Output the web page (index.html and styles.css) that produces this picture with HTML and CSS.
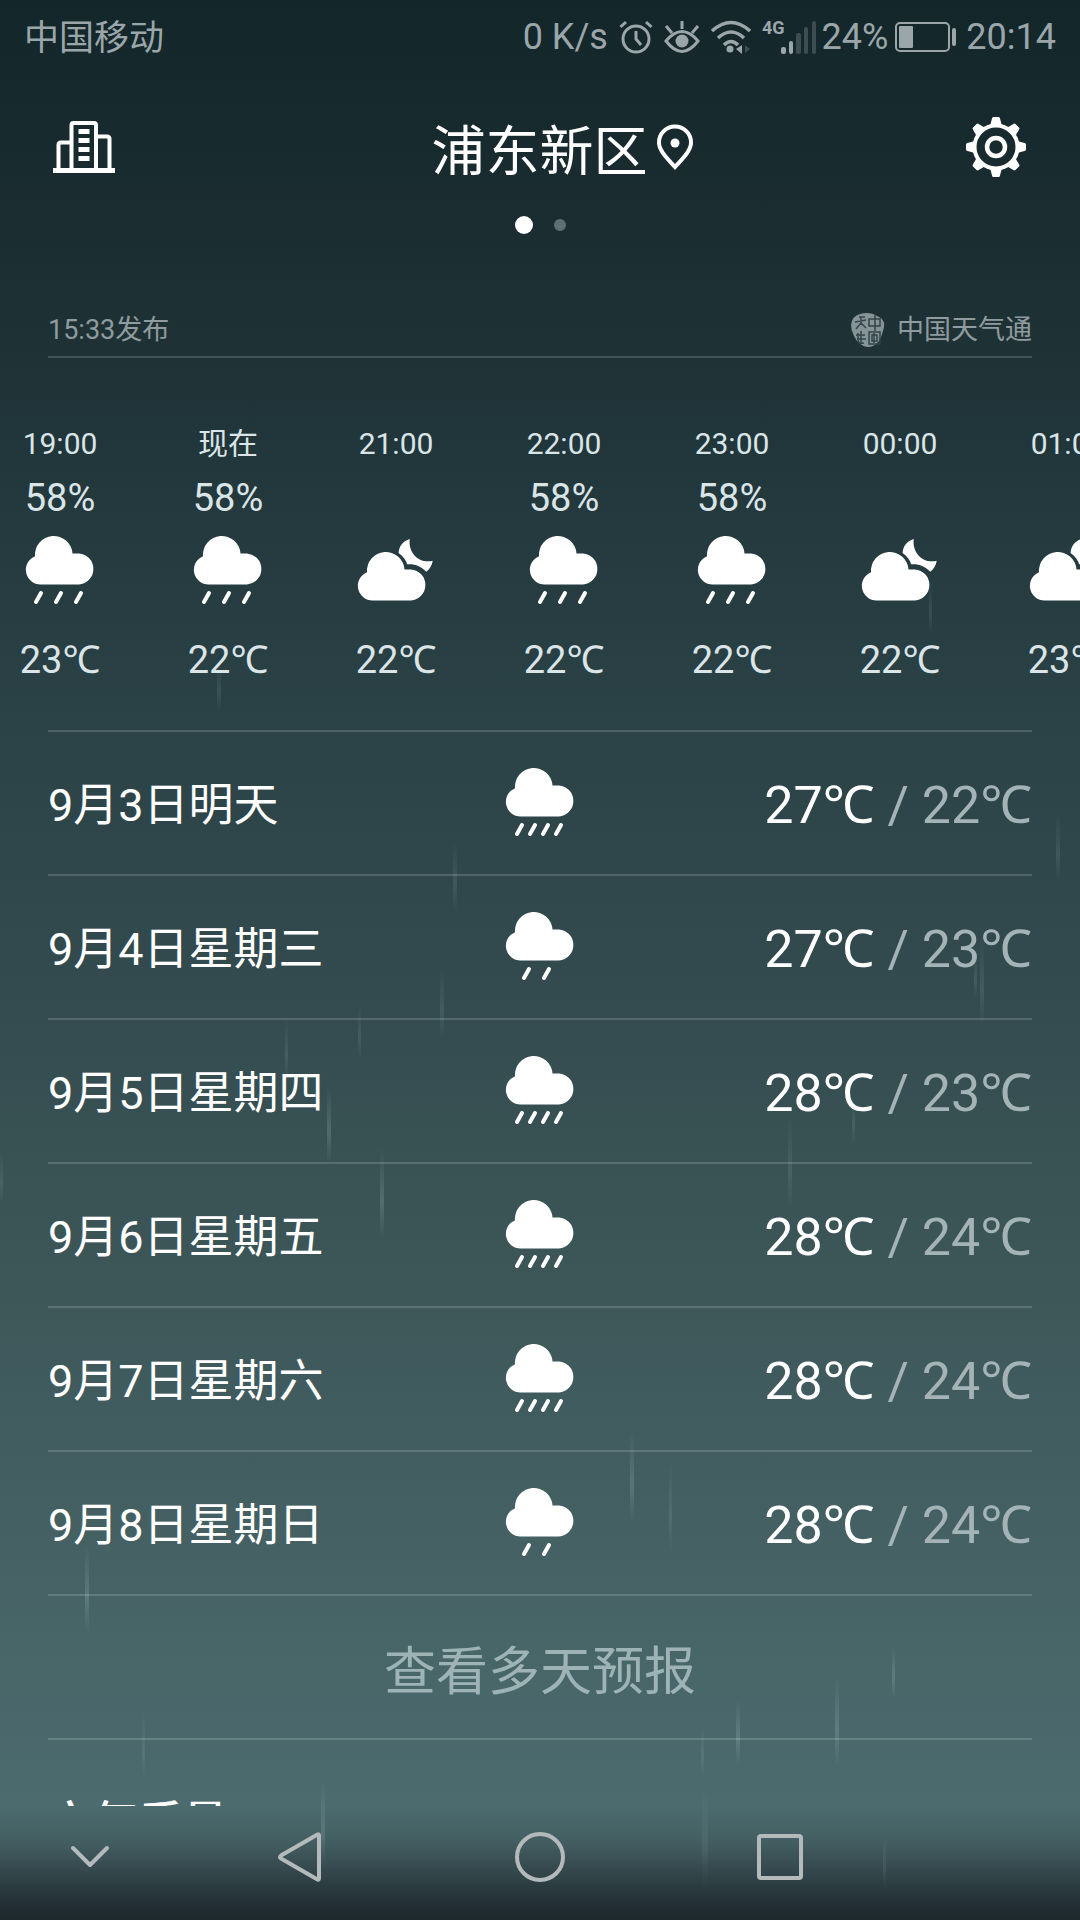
FILE: index.html
```html
<!DOCTYPE html>
<html lang="zh-CN">
<head>
    <meta charset="UTF-8">
    <meta name="viewport" content="width=device-width, initial-scale=1.0">
    <title>天气</title>
    <link rel="stylesheet" href="styles.css">
</head>
<body>
    <!-- Shared weather symbols -->
    <svg class="symbols" aria-hidden="true">
        <defs>
            <path id="cloud" d="M14.7 47.5A14.7 14.7 0 0 1 9 19.2A18.8 18.8 0 0 1 46.5 16.4H53A15.6 15.6 0 0 1 53 47.5Z"/>
            <path id="drop" d="M5 0L0 9"/>
            <linearGradient id="streak" x1="0" y1="0" x2="0" y2="1">
                <stop offset="0" stop-color="#b4d2d2" stop-opacity="0"/>
                <stop offset="0.6" stop-color="#b4d2d2" stop-opacity="0.2"/>
                <stop offset="1" stop-color="#b4d2d2" stop-opacity="0"/>
            </linearGradient>
            <linearGradient id="streak-faint" x1="0" y1="0" x2="0" y2="1">
                <stop offset="0" stop-color="#b4d2d2" stop-opacity="0"/>
                <stop offset="0.6" stop-color="#b4d2d2" stop-opacity="0.12"/>
                <stop offset="1" stop-color="#b4d2d2" stop-opacity="0"/>
            </linearGradient>
            <symbol id="rain-light" viewBox="0 0 76 68" overflow="visible">
                <use href="#cloud" x="4" y="0"/>
                <use href="#drop" x="22" y="56"/>
                <use href="#drop" x="42" y="56"/>
            </symbol>
            <symbol id="rain" viewBox="0 0 76 68" overflow="visible">
                <use href="#cloud" x="4" y="0"/>
                <use href="#drop" x="14" y="56"/>
                <use href="#drop" x="34" y="56"/>
                <use href="#drop" x="54" y="56"/>
            </symbol>
            <symbol id="rain-heavy" viewBox="0 0 76 68" overflow="visible">
                <use href="#cloud" x="4" y="0"/>
                <use href="#drop" x="15" y="56"/>
                <use href="#drop" x="28" y="56"/>
                <use href="#drop" x="41" y="56"/>
                <use href="#drop" x="54" y="56"/>
            </symbol>
            <symbol id="cloudy-night" viewBox="0 0 76 68" overflow="visible">
                <use href="#cloud" x="0" y="16"/>
                <path d="M51.7 2C45 4 41 9 40.6 16C45 19 48 23 49.2 27.3C56 26.5 63 29 68.2 34.7C72 32 74 28 74.7 23.7C62 27 50 17 51.7 2Z"/>
            </symbol>
        </defs>
    </svg>

    <!-- Falling rain behind the content -->
    <svg class="rain-layer" viewBox="0 0 1080 1920" preserveAspectRatio="none" aria-hidden="true">
        <g fill="url(#streak-faint)">
            <rect x="217" y="660" width="4" height="52"/>
            <rect x="929" y="580" width="3" height="54"/>
            <rect x="453" y="840" width="4" height="72"/>
            <rect x="1056" y="812" width="4" height="70"/>
            <rect x="440" y="970" width="4" height="68"/>
            <rect x="358" y="1005" width="3" height="54"/>
            <rect x="285" y="1018" width="3" height="64"/>
            <rect x="0" y="1150" width="3" height="54"/>
            <rect x="974" y="950" width="3" height="50"/>
            <rect x="980" y="936" width="4" height="90"/>
            <rect x="788" y="1115" width="4" height="94"/>
            <rect x="852" y="1096" width="3" height="48"/>
            <rect x="669" y="1462" width="3" height="90"/>
            <rect x="142" y="1712" width="3" height="66"/>
            <rect x="701" y="1726" width="3" height="50"/>
            <rect x="702" y="1790" width="6" height="104"/>
        </g>
        <g fill="url(#streak)">
            <rect x="327" y="1085" width="4" height="78"/>
            <rect x="380" y="1148" width="4" height="90"/>
            <rect x="630" y="1430" width="4" height="92"/>
            <rect x="85" y="1545" width="4" height="88"/>
            <rect x="321" y="1780" width="4" height="90"/>
            <rect x="892" y="1645" width="3" height="54"/>
            <rect x="835" y="1676" width="4" height="90"/>
            <rect x="736" y="1700" width="4" height="64"/>
            <rect x="883" y="1836" width="3" height="56"/>
        </g>
    </svg>

    <div class="status-bar">
        <span class="carrier">中国移动</span>
        <div class="status-icons">
            <span>0 K/s</span>
            <svg width="34" height="34" viewBox="0 0 34 34" fill="none" stroke="currentColor" stroke-width="3">
                <circle cx="17" cy="19" r="13"/>
                <path d="M17 11V19L22 25M1.500 7L7 2M32.500 7L27 2"/>
            </svg>
            <svg width="36" height="34" viewBox="0 0 36 34" fill="none" stroke="currentColor" stroke-width="3">
                <path d="M2 21Q18 2 34 21Q18 42 2 21ZM18 9V1M8 13L2 6M28 13L34 6"/>
                <circle cx="18" cy="21" r="6.500" fill="currentColor" stroke="none"/>
            </svg>
            <svg width="40" height="34" viewBox="0 0 40 34" fill="none" stroke="currentColor" stroke-width="3.500">
                <path d="M1 11Q20-6 39 11M7 18Q20 6 33 18M13 25Q20 18 27 25"/>
                <circle cx="19" cy="29" r="3.500" fill="currentColor" stroke="none"/>
                <path d="M31 25V34L25 29Z" fill="currentColor" stroke="none"/>
                <path d="M34 25V33L39 29Z" fill="currentColor" stroke="none" opacity="0.3"/>
            </svg>
            <div class="signal">
                <span class="network">4G</span>
                <svg width="36" height="34" viewBox="0 0 36 34" fill="currentColor">
                    <rect x="0" y="27" width="5" height="7" rx="2"/>
                    <rect x="8" y="21" width="4" height="13" rx="2"/>
                    <g opacity="0.3">
                        <rect x="15" y="13" width="5" height="21" rx="2"/>
                        <rect x="23" y="7" width="4" height="27" rx="2"/>
                        <rect x="31" y="1" width="4" height="33" rx="2"/>
                    </g>
                </svg>
            </div>
            <span>24%</span>
            <svg class="battery" width="62" height="30" viewBox="0 0 62 30" fill="currentColor">
                <rect x="1" y="1" width="53" height="28" rx="4" fill="none" stroke="currentColor" stroke-width="2"/>
                <rect x="4" y="4" width="14" height="22" rx="1"/>
                <rect x="57" y="6" width="4" height="18" rx="2"/>
            </svg>
            <span>20:14</span>
        </div>
    </div>

    <header class="header">
        <button class="icon-btn" aria-label="城市管理">
            <svg width="62" height="52" viewBox="0 0 62 52" fill="none" stroke="#fff" stroke-width="4">
                <path d="M0 49.500H62" stroke-width="5"/>
                <path d="M18.500 49V4Q18.500 2 20.500 2H41Q43 2 43 4V49M18 21.500H8Q5.500 21.500 5.500 24V49M43 15.500H54Q56.500 15.500 56.500 18V49"/>
                <path d="M25.500 10.500H36.500M25.500 19.500H36.500M25.500 28.500H36.500M25.500 37.500H36.500" stroke-width="5"/>
            </svg>
        </button>
        <h1 class="city">浦东新区</h1>
        <div class="header-right">
            <svg width="38" height="46" viewBox="0 0 38 46" fill="none" stroke="#fff" stroke-width="4">
                <path d="M19 43C12 35 3 27 3 18.500A16 16 0 0 1 35 18.500C35 27 26 35 19 43Z"/>
                <circle cx="19" cy="19" r="4.500" fill="#fff" stroke="none"/>
            </svg>
            <button class="icon-btn" aria-label="设置">
                <svg width="60" height="60" viewBox="0 0 60 60" fill="none" stroke="#fff">
                    <defs><path id="tooth" d="M24 9L26 1.500Q26.200 0 27.500 0H32.500Q33.800 0 34 1.500L36 9Z" fill="#fff" stroke="none"/></defs>
                    <use href="#tooth"/>
                    <use href="#tooth" transform="rotate(45 30 30)"/>
                    <use href="#tooth" transform="rotate(90 30 30)"/>
                    <use href="#tooth" transform="rotate(135 30 30)"/>
                    <use href="#tooth" transform="rotate(180 30 30)"/>
                    <use href="#tooth" transform="rotate(225 30 30)"/>
                    <use href="#tooth" transform="rotate(270 30 30)"/>
                    <use href="#tooth" transform="rotate(315 30 30)"/>
                    <circle cx="30" cy="30" r="21.500" stroke-width="4"/>
                    <circle cx="30" cy="30" r="9" stroke-width="4.500"/>
                </svg>
            </button>
        </div>
    </header>
    <div class="pager">
        <span class="dot active"></span>
        <span class="dot"></span>
    </div>

    <main class="content">
        <div class="source">
            <span>15:33发布</span>
            <span class="provider">
                <svg width="34" height="36" viewBox="0 0 34 36">
                    <path d="M0 13Q1 4 9 2Q19-1 28 5Q34 8 33 15Q31 24 28 29Q24 35 16 35Q7 33 3 24Q0 18 0 13Z" fill="#869497"/>
                    <path d="M8 5H14M4 10L15 8M10 5V11L5 17M10 11L15 16M18 7H29V14H18ZM24 3V19M7 21V28Q7 32 13 31M5 23H14M10 19V31M6 27H15M18 20H29V32H18ZM21 23H26V29H21ZM23 21V31" fill="none" stroke="#33444a" stroke-width="1.500"/>
                </svg>
                中国天气通
            </span>
        </div>

        <div class="hourly">
            <div class="hour"><span class="time">19:00</span><span class="chance">58%</span><svg class="weather"><use href="#rain"/></svg><span class="temp">23℃</span></div>
            <div class="hour"><span class="time">现在</span><span class="chance">58%</span><svg class="weather"><use href="#rain"/></svg><span class="temp">22℃</span></div>
            <div class="hour"><span class="time">21:00</span><span class="chance"></span><svg class="weather"><use href="#cloudy-night"/></svg><span class="temp">22℃</span></div>
            <div class="hour"><span class="time">22:00</span><span class="chance">58%</span><svg class="weather"><use href="#rain"/></svg><span class="temp">22℃</span></div>
            <div class="hour"><span class="time">23:00</span><span class="chance">58%</span><svg class="weather"><use href="#rain"/></svg><span class="temp">22℃</span></div>
            <div class="hour"><span class="time">00:00</span><span class="chance"></span><svg class="weather"><use href="#cloudy-night"/></svg><span class="temp">22℃</span></div>
            <div class="hour"><span class="time">01:00</span><span class="chance"></span><svg class="weather"><use href="#cloudy-night"/></svg><span class="temp">23℃</span></div>
        </div>

        <ul class="daily">
            <li class="day"><span class="date">9月3日明天</span><svg class="weather"><use href="#rain-heavy"/></svg><span class="range">27℃ <span class="low">/ 22℃</span></span></li>
            <li class="day"><span class="date">9月4日星期三</span><svg class="weather"><use href="#rain-light"/></svg><span class="range">27℃ <span class="low">/ 23℃</span></span></li>
            <li class="day"><span class="date">9月5日星期四</span><svg class="weather"><use href="#rain-heavy"/></svg><span class="range">28℃ <span class="low">/ 23℃</span></span></li>
            <li class="day"><span class="date">9月6日星期五</span><svg class="weather"><use href="#rain-heavy"/></svg><span class="range">28℃ <span class="low">/ 24℃</span></span></li>
            <li class="day"><span class="date">9月7日星期六</span><svg class="weather"><use href="#rain-heavy"/></svg><span class="range">28℃ <span class="low">/ 24℃</span></span></li>
            <li class="day"><span class="date">9月8日星期日</span><svg class="weather"><use href="#rain-light"/></svg><span class="range">28℃ <span class="low">/ 24℃</span></span></li>
        </ul>
        <button class="more">查看多天预报</button>

        <h2 class="air-title">空气质量</h2>
    </main>

    <!-- System navigation keys -->
    <nav class="nav-bar">
        <button class="icon-btn" aria-label="收起">
            <svg width="40" height="24" viewBox="0 0 40 24"><path d="M3 3L20 20L37 3"/></svg>
        </button>
        <button class="icon-btn" aria-label="返回">
            <svg width="46" height="52" viewBox="0 0 46 52"><path d="M42 4.500V47.500Q42 49 40.500 48.500L4 27.500Q2 26 4 24.500L40.500 3.500Q42 3 42 4.500Z"/></svg>
        </button>
        <button class="icon-btn" aria-label="主屏幕">
            <svg width="52" height="52" viewBox="0 0 52 52"><circle cx="26" cy="26" r="23"/></svg>
        </button>
        <button class="icon-btn" aria-label="最近任务">
            <svg width="46" height="46" viewBox="0 0 46 46"><rect x="2" y="2" width="42" height="42" rx="2"/></svg>
        </button>
    </nav>
</body>
</html>
```
FILE: styles.css
```css
* {
    box-sizing: border-box;
}
body {
    position: relative;
    display: flex;
    flex-direction: column;
    height: 100vh;
    margin: 0;
    overflow: hidden;
    font-family: Roboto, "Noto Sans", "Noto Sans CJK SC", sans-serif;
    color: #fff;
    background: linear-gradient(#13262a 0%, #1b2d31 12%, #22383c 25%, #2b4246 38%, #344c4f 53%, #3d5759 67%, #466265 82%, #4c6b6e 94%, #4c6b6e 100%);
}
button {
    padding: 0;
    border: none;
    background: none;
    font-family: inherit;
    color: inherit;
    cursor: pointer;
}
svg {
    display: block;
    flex: none;
}
.symbols {
    position: absolute;
    width: 0;
    height: 0;
}
.rain-layer {
    position: absolute;
    top: 0;
    left: 0;
    width: 100%;
    height: 100%;
    z-index: -1;
}

/* Status bar */
.status-bar {
    display: flex;
    justify-content: space-between;
    align-items: center;
    height: 74px;
    padding: 0 24px;
    font-size: 36px;
    line-height: 44px;
    color: #9ba6aa;
}
.carrier {
    padding-top: 4px;
    font-size: 35px;
}
.status-icons {
    display: flex;
    align-items: center;
    gap: 11px;
}
.signal {
    display: flex;
    margin-right: -6px;
}
.network {
    margin-right: -4px;
    font-size: 18px;
    line-height: 16px;
    font-weight: 700;
}
.battery {
    margin: 0 -2px 0 -4px;
}

/* Header */
.header {
    display: grid;
    grid-template-columns: 1fr auto 1fr;
    align-items: center;
    padding: 29px 54px 0 53px;
}
.icon-btn {
    display: flex;
}
.city {
    margin: 0;
    padding-top: 12px;
    font-size: 54px;
    line-height: 76px;
    font-weight: 400;
}
.header-right {
    display: flex;
    justify-content: space-between;
    align-items: center;
    padding-left: 8px;
}
.pager {
    display: flex;
    justify-content: center;
    align-items: center;
    gap: 21px;
    height: 18px;
    margin-top: 25px;
}
.dot {
    width: 12px;
    height: 12px;
    border-radius: 50%;
    background-color: #5f6e71;
}
.dot.active {
    width: 18px;
    height: 18px;
    background-color: #fff;
}

/* Forecast */
.content {
    flex: 1;
    min-height: 0;
    padding: 74px 48px 0;
    overflow: hidden;
}
.source {
    display: flex;
    justify-content: space-between;
    align-items: center;
    height: 50px;
    padding-bottom: 4px;
    margin-bottom: 68px;
    font-size: 27px;
    line-height: 40px;
    color: #8f9b9e;
    border-bottom: 2px solid rgba(255, 255, 255, 0.16);
}
.provider {
    display: flex;
    align-items: center;
    gap: 12px;
}
.hourly {
    display: flex;
    margin: 0 -48px 47px -72px;
    overflow: hidden;
}
.hour {
    display: flex;
    flex: none;
    flex-direction: column;
    align-items: center;
    width: 168px;
    color: #dbe5e8;
}
.time {
    height: 36px;
    font-size: 30px;
    line-height: 36px;
}
.chance,
.temp {
    height: 46px;
    font-size: 38px;
    line-height: 46px;
}
.chance {
    margin: 13px 0 16px;
}
.weather {
    width: 76px;
    height: 68px;
    overflow: visible;
    fill: #fff;
    stroke-linecap: round;
}
#drop {
    stroke: #fff;
    stroke-width: 4px;
}
.temp {
    margin-top: 32px;
}
.daily {
    margin: 0;
    padding: 0;
    list-style: none;
    border-top: 2px solid rgba(255, 255, 255, 0.16);
}
.day {
    display: grid;
    grid-template-columns: 1fr auto 1fr;
    align-items: center;
    height: 144px;
    line-height: 64px;
    border-bottom: 2px solid rgba(255, 255, 255, 0.16);
}
.date {
    padding-top: 6px;
    font-size: 45px;
}
.range {
    justify-self: end;
    padding-top: 6px;
    font-size: 52px;
}
.low {
    color: #a4b3b5;
}
.more {
    display: block;
    width: 100%;
    height: 144px;
    font-size: 52px;
    color: #9db3b5;
    border-bottom: 2px solid rgba(255, 255, 255, 0.16);
}
.air-title {
    margin: 0;
    padding-top: 54px;
    font-size: 45px;
    line-height: 60px;
    font-weight: 500;
}

/* Navigation keys */
.nav-bar {
    display: grid;
    grid-template-columns: 180px 1fr 1fr 1fr 180px;
    align-items: center;
    justify-items: center;
    height: 114px;
    padding-bottom: 12px;
    background: linear-gradient(rgba(20, 26, 32, 0), rgba(20, 26, 32, 0.15) 30%, rgba(20, 26, 32, 0.78) 90%, rgba(20, 26, 32, 0.8));
}
.nav-bar svg {
    fill: none;
    stroke: #b4babb;
    stroke-width: 4px;
    stroke-linecap: round;
    stroke-linejoin: round;
}
```
